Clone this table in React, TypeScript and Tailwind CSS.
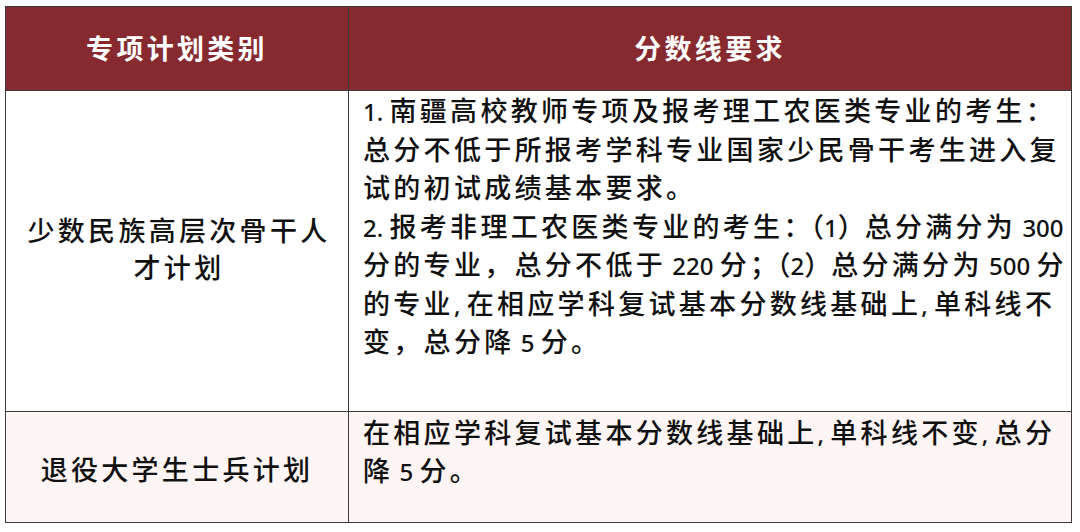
import type { ReactNode } from "react"

const font = { fontFamily: '"Liberation Sans", "Noto Sans CJK SC", sans-serif' }

// latin runs are tighter than the CJK text around them
function L({ children }: { children: ReactNode }) {
  return <span className="text-[24px] tracking-normal font-['Noto_Sans',sans-serif]">{children}</span>
}

// punctuation + bracket groups sit closer together
function P({ children }: { children: ReactNode }) {
  return <span className="tracking-normal">{children}</span>
}

function Line({ children }: { children: ReactNode }) {
  return <div className="whitespace-nowrap">{children}</div>
}

export default function App() {
  return (
    <div className="w-[1080px] h-[532px] bg-white pt-[6px] pl-[5px]" style={font}>
      <div className="w-[1067px] border border-[#3a3a3a] grid grid-cols-[343px_722px] grid-rows-[84px_321px_110px] text-[27px] tracking-[3.3px] text-[#111] font-medium">
        <div className="bg-[#862a2f] border-r border-b border-[#3a3a3a] flex items-center justify-center font-bold text-white pt-[4px]">
          专项计划类别
        </div>
        <div className="bg-[#862a2f] border-b border-[#3a3a3a] flex items-center justify-center font-bold text-white pt-[4px]">
          分数线要求
        </div>

        <div className="border-r border-b border-[#3a3a3a] flex flex-col items-center justify-center leading-[37px] pl-[4px]">
          <Line>少数民族高层次骨干人</Line>
          <Line>才计划</Line>
        </div>
        <div className="border-b border-[#3a3a3a] pl-[14px] pt-[2px] leading-[38.5px]">
          <Line><L>1. </L>南疆高校教师专项及报考理工农医类专业的考生：</Line>
          <Line>总分不低于所报考学科专业国家少民骨干考生进入复</Line>
          <Line>试的初试成绩基本要求。</Line>
          <Line><L>2. </L>报考非理工农医类专业的考生<P>：（<L>1</L>）</P>总分满分为<L> 300</L></Line>
          <Line>分的专业，总分不低于<L> 220 </L>分<P>；（<L>2</L>）</P>总分满分为<L> 500 </L>分</Line>
          <Line>的专业<L>, </L>在相应学科复试基本分数线基础上<L>, </L>单科线不</Line>
          <Line>变，总分降<L> 5 </L>分。</Line>
        </div>

        <div className="bg-[#fdf5f4] border-r border-[#3a3a3a] flex items-center justify-center leading-[37px] pt-[8px]">
          退役大学生士兵计划
        </div>
        <div className="bg-[#fdf5f4] pl-[14px] pt-[3px] leading-[38px]">
          <Line>在相应学科复试基本分数线基础上<L>, </L>单科线不变<L>, </L>总分</Line>
          <Line>降<L> 5 </L>分。</Line>
        </div>
      </div>
    </div>
  )
}
